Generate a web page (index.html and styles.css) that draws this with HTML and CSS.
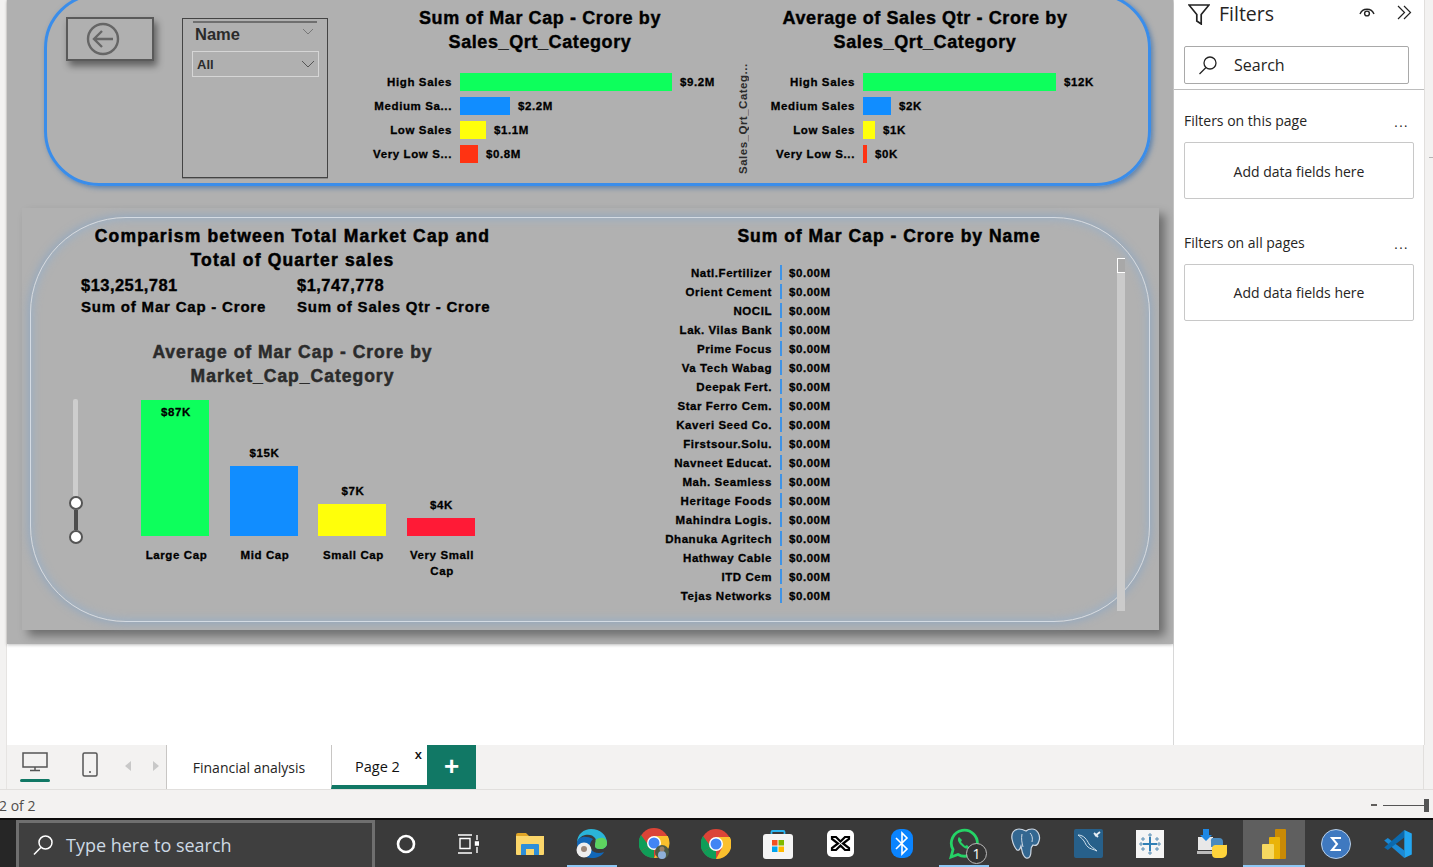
FILE: index.html
```html
<!DOCTYPE html>
<html lang="en">
<head>
<meta charset="utf-8">
<title>Financial analysis</title>
<link rel="stylesheet" href="styles.css">
</head>
<body>
<div class="app">
  <div class="main">
    <div class="gutter"></div>
    <div class="report">
      <div class="page">
        <section class="top-card">
          <div class="back-btn">
            <svg width="34" height="34" viewBox="0 0 34 34" fill="none" stroke="#666" stroke-width="2.4"><circle cx="17" cy="17" r="15"/><path d="M27 17H8M16 9l-8 8 8 8"/></svg>
          </div>
          <div class="slicer">
            <div class="slicer-head"><span>Name</span><svg class="chev" width="12" height="7" viewBox="0 0 12 7" fill="none" stroke="#777"><path d="M1 1l5 5 5-5"/></svg></div>
            <div class="slicer-drop"><span>All</span><svg width="14" height="8" viewBox="0 0 14 8" fill="none" stroke="#555"><path d="M1 1l6 6 6-6"/></svg></div>
          </div>
          <div class="hchart hchart-a">
            <h2 class="title">Sum of Mar Cap - Crore by<br>Sales_Qrt_Category</h2>
            <div class="hrows">
              <div class="hrow"><span class="hlabel">High Sales</span><i class="hbar green w212"></i><b>$9.2M</b></div>
              <div class="hrow"><span class="hlabel">Medium Sa...</span><i class="hbar blue w50"></i><b>$2.2M</b></div>
              <div class="hrow"><span class="hlabel">Low Sales</span><i class="hbar yellow w26"></i><b>$1.1M</b></div>
              <div class="hrow"><span class="hlabel">Very Low S...</span><i class="hbar red w18"></i><b>$0.8M</b></div>
            </div>
          </div>
          <div class="hchart hchart-b">
            <h2 class="title">Average of Sales Qtr - Crore by<br>Sales_Qrt_Category</h2>
            <div class="hbody">
              <div class="axis-title"><span>Sales_Qrt_Categ...</span></div>
              <div class="hrows">
                <div class="hrow"><span class="hlabel">High Sales</span><i class="hbar green w193"></i><b>$12K</b></div>
                <div class="hrow"><span class="hlabel">Medium Sales</span><i class="hbar blue w28"></i><b>$2K</b></div>
                <div class="hrow"><span class="hlabel">Low Sales</span><i class="hbar yellow w12"></i><b>$1K</b></div>
                <div class="hrow"><span class="hlabel">Very Low S...</span><i class="hbar red w4"></i><b>$0K</b></div>
              </div>
            </div>
          </div>
        </section>

        <section class="bottom-panel">
          <div class="inner">
            <div class="left-col">
              <h2 class="title wide">Comparism between Total Market Cap and<br>Total of Quarter sales</h2>
              <div class="kpis">
                <div class="kpi"><strong>$13,251,781</strong><span>Sum of Mar Cap - Crore</span></div>
                <div class="kpi"><strong>$1,747,778</strong><span>Sum of Sales Qtr - Crore</span></div>
              </div>
              <h2 class="title wide muted">Average of Mar Cap - Crore by<br>Market_Cap_Category</h2>
              <div class="vchart">
                <div class="range">
                  <div class="track"></div>
                  <div class="thumb"></div>
                  <div class="span"></div>
                  <div class="thumb"></div>
                </div>
                <div class="cols">
                  <div class="col"><div class="plot"><div class="vbar green h136"><em>$87K</em></div></div><p>Large Cap</p></div>
                  <div class="col"><div class="plot"><em>$15K</em><div class="vbar blue h70"></div></div><p>Mid Cap</p></div>
                  <div class="col"><div class="plot"><em>$7K</em><div class="vbar yellow h32"></div></div><p>Small Cap</p></div>
                  <div class="col"><div class="plot"><em>$4K</em><div class="vbar crimson h18"></div></div><p>Very Small<br>Cap</p></div>
                </div>
              </div>
            </div>
            <div class="right-col">
              <h2 class="title wide narrow">Sum of Mar Cap - Crore by Name</h2>
              <div class="list">
                <div class="lrow"><span>Natl.Fertilizer</span><i></i><b>$0.00M</b></div>
                <div class="lrow"><span>Orient Cement</span><i></i><b>$0.00M</b></div>
                <div class="lrow"><span>NOCIL</span><i></i><b>$0.00M</b></div>
                <div class="lrow"><span>Lak. Vilas Bank</span><i></i><b>$0.00M</b></div>
                <div class="lrow"><span>Prime Focus</span><i></i><b>$0.00M</b></div>
                <div class="lrow"><span>Va Tech Wabag</span><i></i><b>$0.00M</b></div>
                <div class="lrow"><span>Deepak Fert.</span><i></i><b>$0.00M</b></div>
                <div class="lrow"><span>Star Ferro Cem.</span><i></i><b>$0.00M</b></div>
                <div class="lrow"><span>Kaveri Seed Co.</span><i></i><b>$0.00M</b></div>
                <div class="lrow"><span>Firstsour.Solu.</span><i></i><b>$0.00M</b></div>
                <div class="lrow"><span>Navneet Educat.</span><i></i><b>$0.00M</b></div>
                <div class="lrow"><span>Mah. Seamless</span><i></i><b>$0.00M</b></div>
                <div class="lrow"><span>Heritage Foods</span><i></i><b>$0.00M</b></div>
                <div class="lrow"><span>Mahindra Logis.</span><i></i><b>$0.00M</b></div>
                <div class="lrow"><span>Dhanuka Agritech</span><i></i><b>$0.00M</b></div>
                <div class="lrow"><span>Hathway Cable</span><i></i><b>$0.00M</b></div>
                <div class="lrow"><span>ITD Cem</span><i></i><b>$0.00M</b></div>
                <div class="lrow"><span>Tejas Networks</span><i></i><b>$0.00M</b></div>
              </div>
              <div class="vscroll"><div class="vthumb"></div></div>
            </div>
          </div>
        </section>
      </div>
    </div>
    <aside class="filters">
      <div class="f-head">
        <svg width="22" height="21" viewBox="0 0 22 21" fill="none" stroke="#222" stroke-width="1.7"><path d="M1 1h20l-7.8 9.5V20l-4.4-3v-6.500z"/></svg>
        <span class="f-title">Filters</span>
        <svg class="f-eye" width="16" height="12" viewBox="0 0 16 12" fill="none" stroke="#222" stroke-width="1.4"><path d="M1 8a7.500 7.500 0 0 1 14 0"/><circle cx="8" cy="7.500" r="2.400"/></svg>
        <svg class="f-coll" width="15" height="15" viewBox="0 0 15 15" fill="none" stroke="#222" stroke-width="1.200"><path d="M1 1l6.500 6.500L1 14M7 1l6.500 6.500L7 14"/></svg>
      </div>
      <div class="f-search">
        <svg width="20" height="20" viewBox="0 0 20 20" fill="none" stroke="#222" stroke-width="1.300"><circle cx="12" cy="8" r="6"/><path d="M8 12.500L1.500 19"/></svg>
        <span>Search</span>
      </div>
      <div class="f-body">
        <div class="f-label"><span>Filters on this page</span><span class="dots">...</span></div>
        <div class="f-well">Add data fields here</div>
        <div class="f-label second"><span>Filters on all pages</span><span class="dots">...</span></div>
        <div class="f-well">Add data fields here</div>
      </div>
    </aside>
    <div class="strip"><i></i></div>
  </div>

  <div class="tabs">
    <div class="gutter"></div>
    <div class="views">
      <div class="view active">
        <svg width="26" height="20" viewBox="0 0 26 20" fill="none" stroke="#555" stroke-width="1.500"><rect x="1" y="1" width="24" height="14"/><path d="M13 15v3M8 18.500h10"/></svg>
      </div>
      <div class="view">
        <svg width="16" height="25" viewBox="0 0 16 25" fill="none" stroke="#555" stroke-width="1.500"><rect x="1" y="1" width="14" height="23" rx="1.500"/><path d="M7 20h2"/></svg>
      </div>
      <span class="tri left"></span>
      <span class="tri right"></span>
    </div>
    <div class="tab">Financial analysis</div>
    <div class="tab current">Page 2<span class="x">x</span></div>
    <div class="add">+</div>
    <div class="tabs-fill"></div>
  </div>

  <div class="status">
    <span class="pg">2 of 2</span>
    <div class="zoom"><span class="minus"></span><span class="zline"></span><span class="zhandle"></span></div>
  </div>

  <footer class="taskbar">
    <div class="tb-start"></div>
    <div class="tb-search">
      <svg width="22" height="22" viewBox="0 0 22 22" fill="none" stroke="#fff" stroke-width="1.500"><circle cx="13.500" cy="8.500" r="6.500"/><path d="M8.800 13.500L2 20.500"/></svg>
      <span>Type here to search</span>
    </div>
    <div class="tb-icons">
      <div class="tb-i"><svg width="22" height="22" viewBox="0 0 22 22" fill="none" stroke="#fff" stroke-width="2.600"><circle cx="11" cy="11" r="8"/></svg></div>
      <div class="tb-i"><svg width="22" height="20" viewBox="0 0 22 20" fill="none" stroke="#fff" stroke-width="1.400"><path d="M1 1h14M1 19h14M3 4.500h10v10H3zM20 1v5M20 13v6"/><path d="M18.500 8h3v3h-3z" fill="#fff"/></svg></div>
      <div class="tb-i"><svg width="28" height="24" viewBox="0 0 28 24"><path d="M0 3a2 2 0 0 1 2-2h8l3 3H0z" fill="#e0a526"/><path d="M0 4h28v18a1 1 0 0 1-1 1H1a1 1 0 0 1-1-1z" fill="#fbd66a"/><path d="M6 12h16a1 1 0 0 1 1 1v10h-5v-6h-8v6H5V13a1 1 0 0 1 1-1z" fill="#2f8fd8"/></svg></div>
      <div class="tb-i on"><svg width="32" height="31" viewBox="0 0 32 31"><path d="M1 15C1 6 8 1 15 1c9 0 16 6 16 14 0 4-3 6-7 6-3 0-5-1-5-3 0-4 2-5 0-8-2-3-6-4-10-3C5 8 2 11 1 15z" fill="#2ab4d9"/><path d="M31 15c0 4-3 6-7 6-3 0-5-1-5-3 0-3 1-4 .500-6C25 8 31 10 31 15z" fill="#5ed35f"/><path d="M1 15c0 9 6 15 15 15 5 0 10-2 12-6-5 2-11 1-13-3-2-3-1-7 2-10C10 7 2 8 1 15z" fill="#1167b8"/><circle cx="8" cy="22" r="7.500" fill="#eee"/><circle cx="8" cy="21" r="3" fill="#9a8678"/></svg></div>
      <div class="tb-i"><svg width="31" height="31" viewBox="0 0 31 31"><circle cx="15" cy="15" r="15" fill="#db4437"/><path d="M15 15L2 23a15 15 0 0 0 13 7z" fill="#0f9d58"/><path d="M2 7A15 15 0 0 0 2 23l8-5z" fill="#0f9d58"/><path d="M15 8h13.800A15 15 0 0 1 15 30l6-11z" fill="#fbc02d"/><circle cx="15" cy="15" r="7" fill="#fff"/><circle cx="15" cy="15" r="5.500" fill="#4285f4"/><circle cx="23" cy="24" r="7" fill="#4d5a45"/><circle cx="23" cy="27" r="4" fill="#8eb0d8"/><circle cx="23" cy="21" r="2.500" fill="#9a8168"/></svg></div>
      <div class="tb-i"><svg width="30" height="30" viewBox="0 0 30 30"><circle cx="15" cy="15" r="15" fill="#db4437"/><path d="M15 15L2 23a15 15 0 0 0 13 7z" fill="#0f9d58"/><path d="M2 7A15 15 0 0 0 2 23l8-5z" fill="#0f9d58"/><path d="M15 8h13.800A15 15 0 0 1 15 30l6-11z" fill="#fbc02d"/><circle cx="15" cy="15" r="7" fill="#fff"/><circle cx="15" cy="15" r="5.500" fill="#4285f4"/></svg></div>
      <div class="tb-i"><svg width="30" height="30" viewBox="0 0 30 30"><path d="M8.500 7V3a1 1 0 0 1 1-1h11a1 1 0 0 1 1 1v4" fill="none" stroke="#2bb5f0" stroke-width="1.800"/><rect y="5" width="30" height="25" rx="3" fill="#f4f4f4"/><rect x="9" y="11" width="5.500" height="5.500" fill="#f25022"/><rect x="15.500" y="11" width="5.500" height="5.500" fill="#7fba00"/><rect x="9" y="17.500" width="5.500" height="5.500" fill="#00a4ef"/><rect x="15.500" y="17.500" width="5.500" height="5.500" fill="#ffb900"/></svg></div>
      <div class="tb-i"><svg width="27" height="27" viewBox="0 0 27 27"><rect width="27" height="27" rx="5" fill="#fff"/><path d="M5 7h4l4.500 4.500L18 7h4v2l-6 4.500 6 4.500v2h-4l-4.500-4.500L9 20H5v-2l6-4.500L5 9z" fill="none" stroke="#000" stroke-width="2.200"/></svg></div>
      <div class="tb-i"><svg width="22" height="29" viewBox="0 0 22 29"><rect width="22" height="29" rx="9" fill="#0a84ff"/><path d="M5 9l11 11-5 5V4l5 5-11 11" fill="none" stroke="#fff" stroke-width="1.600"/></svg></div>
      <div class="tb-i on"><svg width="32" height="32" viewBox="0 0 32 32" fill="none"><path d="M3 29l2-7.500A13 13 0 1 1 10 26.500z" stroke="#25d366" stroke-width="2.800"/><path d="M11 9c-2 2-1 5 2 8s6 5 9 3l-3-3-2 1-4-4 1-2z" fill="#25d366"/></svg><span class="badge">1</span></div>
      <div class="tb-i"><svg width="30" height="31" viewBox="0 0 30 31"><path d="M8 1C3 1 0 5 1 11c1 5 3 9 5 11 2 1 3-1 4-4 1 4 1 10 5 12 4 1 5-3 5-8 0-3 1-4 2-5 3 1 5 0 6-4 2-6-2-12-7-12-3 0-5 1-6 2C13 2 11 1 8 1z" fill="#336791" stroke="#cfd9e4" stroke-width="1.200"/><path d="M11 6c-1 5 0 9 1 13M19 5c2 2 3 5 2 9" stroke="#cfd9e4" fill="none"/></svg></div>
      <div class="tb-i"><svg width="29" height="29" viewBox="0 0 29 29"><rect width="29" height="29" rx="2" fill="#27608a"/><path d="M4 6c6 0 9 5 11 9 2 3 5 4 8 7-4-2-7-2-9-4-3-3-2-3-4-6C8 9 6 8 4 6z" fill="none" stroke="#cfe0ec" stroke-width="1"/><path d="M21 7l5-4M24 8l-4-4" stroke="#e6eef4" stroke-width="1.800"/></svg></div>
      <div class="tb-i"><svg width="28" height="28" viewBox="0 0 28 28"><rect width="28" height="28" fill="#f5f5f5"/><path d="M14 7v14M7 14h14" stroke="#2f7fb6" stroke-width="2"/><path d="M14 3v4M12 5h4M14 21v4M12 23h4M3 14h4M5 12v4M21 14h4M23 12v4M7 7v4M5 9h4M21 7v4M19 9h4M7 17v4M5 19h4M21 17v4M19 19h4" stroke="#5b8fb5" stroke-width="1"/></svg></div>
      <div class="tb-i"><svg width="30" height="30" viewBox="0 0 30 30"><rect x="1" y="8" width="15" height="13" fill="#e8e8e8"/><rect x="0" y="22" width="16" height="3" fill="#bbb"/><path d="M6 0h6v6h3l-6 6-6-6h3z" fill="#1e88e5"/><path d="M15 9h7a4 4 0 0 1 4 4v3H18v2h-4v-5a4 4 0 0 1 1-4z" fill="#4b8bbe"/><path d="M18 16h11a1 1 0 0 1 1 2v6a5 5 0 0 1-5 5h-6a4 4 0 0 1-4-4v-5a4 4 0 0 1 3-4z" fill="#ffd43b"/></svg></div>
      <div class="tb-i pbi on"><svg width="24" height="30" viewBox="0 0 24 30"><rect x="13" width="11" height="30" rx="1" fill="#c98a05"/><rect x="7" y="8" width="11" height="22" rx="1" fill="#eab308"/><rect y="15" width="12" height="15" rx="1" fill="#f6d860"/></svg></div>
      <div class="tb-i"><svg width="30" height="30" viewBox="0 0 30 30"><circle cx="15" cy="15" r="14.500" fill="#3f79c0" stroke="#b8cfe8"/><path d="M20 9h-9l5 6-5 6h9" fill="none" stroke="#fff" stroke-width="2"/></svg></div>
      <div class="tb-i"><svg width="30" height="30" viewBox="0 0 100 100"><polygon points="4,38 16,30 71,72 71,97" fill="#1a8ad6"/><polygon points="71,3 71,28 16,70 4,62" fill="#0b69ad"/><polygon points="71,3 96,15 96,85 71,97" fill="#23a7f2"/></svg></div>
    </div>
  </footer>
</div>
</body>
</html>
```
FILE: styles.css
```css
* { box-sizing: border-box; }
html, body { margin: 0; padding: 0; }
body { width: 1433px; height: 867px; overflow: hidden; background: #f3f2f1; font-family: "Open Sans", "Noto Sans", sans-serif; color: #252423; }
h2, p { margin: 0; font-weight: inherit; }
i, em { font-style: normal; }

.app { display: flex; flex-direction: column; width: 1433px; height: 867px; }
.main { display: flex; height: 745px; overflow: hidden; }
.gutter { width: 7px; flex: none; background: #f3f2f1; border-right: 1px solid #e6e4e2; }
.report { width: 1167px; flex: none; background: #fff; border-right: 1px solid #d8d8d8; }

.page { height: 644px; background: #b0b0b0; box-shadow: 0 1px 3px rgba(0,0,0,.25); display: flow-root; }

/* shared report text */
.title, .hrow, .lrow, .kpi, .col, .slicer, .axis-title {
  font-family: "Liberation Sans", Arial, sans-serif;
  font-weight: 700;
  color: #000;
}
.title { font-size: 18px; line-height: 24px; text-align: center; letter-spacing: .6px; -webkit-text-stroke: .4px #000; }
.title.wide { font-size: 17.500px; letter-spacing: 1.150px; -webkit-text-stroke: .5px #000; }
.title.wide.narrow { letter-spacing: 1px; }
.title.muted { color: #2b2b2b; -webkit-text-stroke-color: #2b2b2b; letter-spacing: 1px; }

/* top card */
.top-card {
  display: flex; align-items: flex-start;
  margin: -7px 0 0 37px; width: 1107px; height: 193px;
  padding: 21px 0 0 19px;
  border-radius: 55px; border: 3px solid #3a8dea;
  box-shadow: 2px 2px 5px rgba(40,100,170,.6);
}
.back-btn {
  width: 88px; height: 44px; flex: none; padding: 3px 0 0 18px;
  border: 2px solid #5a5a5a; box-shadow: 3px 5px 7px rgba(0,0,0,.45);
}
.back-btn svg { display: block; }
.slicer { width: 146px; height: 160px; flex: none; margin: 1px 0 0 28px; padding: 2px 9px; border: 1px solid #444; box-shadow: 0 1px 0 #8a8a8a; color: #2b2b2b; }
.slicer-head { display: flex; justify-content: space-between; padding: 2px 3px 7px 2px; border-top: 2px solid #6f6f6f; font-size: 16.500px; line-height: 18px; margin: 0 1px; }
.chev { margin-top: 3px; }
.slicer-drop { display: flex; justify-content: space-between; align-items: center; width: 127px; height: 26px; padding: 0 3px 0 4px; margin: 1px 0 0 0; border: 1px solid #d6d6d6; font-size: 13px; }

.hchart { width: 400px; flex: none; margin-top: -11px; }
.hchart-a { margin-left: 12px; }
.hchart-b { margin-left: -15px; }
.hrows { margin-top: 16px; }
.hrow { display: flex; align-items: center; height: 24px; font-size: 11.500px; letter-spacing: .62px; -webkit-text-stroke: .3px #000; }
.hrow b { margin-left: 8px; white-space: nowrap; }
.hlabel { width: 112px; text-align: right; margin-right: 8px; white-space: nowrap; }
.hbody { display: flex; }
.hbody .hrows { flex: 1; }
.hbody .hlabel { width: 104px; }
.axis-title { width: 26px; padding-top: 10px; height: 120px; flex: none; display: flex; justify-content: flex-end; font-size: 11.500px; letter-spacing: .5px; color: #2b2b2b; }
.axis-title span { writing-mode: vertical-rl; transform: rotate(180deg); width: 14px; text-align: left; white-space: nowrap; height: 110px; }
.hbar { display: block; height: 18px; flex: none; }
.green { background: #0dff5c; }
.blue { background: #118dff; }
.yellow { background: #ffff0a; }
.red { background: #ff3312; }
.crimson { background: #ff1a36; }
.w212 { width: 212px; } .w50 { width: 50px; } .w26 { width: 26px; } .w18 { width: 18px; }
.w193 { width: 193px; } .w28 { width: 28px; } .w12 { width: 12px; } .w4 { width: 4px; }

/* bottom panel */
.bottom-panel { margin: 22px 0 0 15px; width: 1137px; height: 422px; padding: 9px 9px 8px 8px; background: #b1b1b1; box-shadow: 6px 6px 9px rgba(0,0,0,.38); }
.inner { display: flex; height: 405px; border-radius: 96px; border: 1px solid #d4dbe3; box-shadow: 0 0 8px 2px #95a9bf, inset 0 0 9px 2px #9db0c4; }
.left-col { width: 523px; flex: none; padding-top: 6px; }
.right-col { width: 522px; flex: none; margin-left: 74px; padding-top: 6px; position: relative; }
.kpis { display: flex; padding-left: 50px; margin-top: 1px; }
.kpi { display: flex; flex-direction: column; letter-spacing: .8px; -webkit-text-stroke: .35px #000; }
.kpi:first-child { width: 216px; }
.kpi strong { font-size: 16.500px; line-height: 24px; letter-spacing: .45px; }
.kpi span { font-size: 15px; line-height: 20px; }
.left-col .muted { margin-top: 23px; }

.vchart { display: flex; margin-top: 11px; padding-left: 37px; }
.range { width: 15px; flex: none; display: flex; flex-direction: column; align-items: center; }
.track { width: 5px; height: 97px; background: #cdcdcd; border-radius: 2px 2px 0 0; }
.thumb { width: 14px; height: 14px; flex: none; background: #fff; border: 2px solid #555; border-radius: 50%; }
.span { width: 4px; height: 20px; background: #4d4d4d; }
.cols { display: flex; margin-left: 58px; gap: 20.500px; }
.col { width: 68px; text-align: center; font-size: 11.500px; letter-spacing: .6px; -webkit-text-stroke: .3px #000; }
.plot { height: 137px; display: flex; flex-direction: column; justify-content: flex-end; align-items: stretch; }
.plot em { display: block; line-height: 14px; margin-bottom: 6px; padding-left: 2px; }
.vbar { display: block; }
.vbar em { padding-top: 5px; }
.h136 { height: 136px; } .h70 { height: 70px; } .h32 { height: 32px; } .h18 { height: 18px; }
.col p { line-height: 16px; margin-top: 11px; padding-left: 3px; width: 74px; margin-left: -3px; }

.list { margin-top: 15px; }
.lrow { display: flex; align-items: center; height: 19px; font-size: 11.500px; letter-spacing: .55px; -webkit-text-stroke: .3px #000; }
.lrow span { width: 144px; text-align: right; white-space: nowrap; }
.lrow i { width: 2px; height: 15px; background: #3f93e6; margin: 0 7px 0 8px; flex: none; }
.vscroll { position: absolute; left: 489px; top: 40px; width: 8px; height: 353px; background: #cbcbcb; }
.vthumb { height: 15px; width: 8px; background: #a8a8a8; border: 1.500px solid #fff; border-right: 0; }

/* filters */
.filters { width: 250px; flex: none; background: #fff; display: flex; flex-direction: column; }
.f-head { display: flex; align-items: center; height: 28px; padding-left: 14px; }
.f-title { font-size: 19.500px; margin-left: 9px; color: #252423; line-height: 28px; }
.f-eye { margin-left: 85px; margin-top: -5px; }
.f-coll { margin-left: 22px; margin-top: -3px; }
.f-search { display: flex; align-items: center; gap: 16px; width: 225px; height: 38px; margin: 18px 0 0 10px; padding-left: 13px; border: 1px solid #a9a9a9; border-radius: 2px; font-size: 16px; }
.f-body { margin-top: 5px; border-top: 1px solid #bdbdbd; padding: 20px 10px 0; }
.f-label { display: flex; justify-content: space-between; height: 22px; padding-right: 5px; font-size: 14px; line-height: 22px; }
.dots { font-size: 13px; letter-spacing: 1.500px; line-height: 24px; }
.f-label.second { margin-top: 33px; }
.f-well { height: 57px; margin-top: 10px; padding-top: 1px; display: flex; align-items: center; justify-content: center; border: 1px solid #c8c8c8; border-radius: 2px; font-size: 14px; }
.f-label.second + .f-well { padding-top: 0; }
.strip { flex: 1; background: #f3f2f1; border-left: 1px solid #e1dfdd; padding-top: 157px; }
.strip i { display: block; height: 1px; width: 4px; margin-left: 4px; background: #b5b5b5; }

/* tabs */
.tabs { display: flex; height: 45px; background: #f3f2f1; border-bottom: 1px solid #e1dfdd; }
.views { display: flex; align-items: flex-start; width: 159px; flex: none; }
.view { height: 44px; padding-top: 7px; }
.view svg { display: block; }
.view.active { width: 30px; margin-left: 13px; padding-left: 2px; }
.view.active::after { content: ""; display: block; width: 30px; height: 3px; margin: 7px 0 0 -2px; background: #117865; border-radius: 2px; }
.view:nth-child(2) { margin-left: 32px; }
.tri { width: 0; height: 0; border: 5px solid transparent; margin-top: 16px; }
.tri.left { border-right: 6px solid #c8c8c8; border-left: 0; margin-left: 27px; }
.tri.right { border-left: 6px solid #c8c8c8; border-right: 0; margin-left: 22px; }
.tab { display: flex; align-items: center; justify-content: center; width: 165px; height: 44px; padding-top: 1px; background: #fff; border-left: 1px solid #c8c6c4; font-size: 14px; }
.tab.current { width: 96px; position: relative; border-bottom: 4px solid #117865; padding-top: 3px; font-size: 14.500px; font-weight: 500; color: #111; padding-right: 4px; }
.x { position: absolute; right: 5px; top: 0; font-size: 13px; font-weight: 600; }
.add { width: 49px; height: 44px; flex: none; background: #117865; color: #fff; font: 700 26px/42px "Liberation Sans", sans-serif; text-align: center; }
.tabs-fill { width: 948px; flex: none; border-right: 1px solid #e1dfdd; }

/* status */
.status { height: 28px; display: flex; justify-content: space-between; align-items: center; padding-top: 2px; overflow: hidden; font-size: 14px; color: #4f4d4b; }
.pg { margin-left: -1px; }
.zoom { display: flex; align-items: center; margin-right: 4px; }
.minus { width: 6px; height: 2px; background: #605e5c; }
.zline { width: 41px; height: 1px; background: #555; margin-left: 6px; }
.zhandle { width: 5px; height: 13px; background: #555; }

/* taskbar */
.taskbar { flex: 1; display: flex; background: #3a3a3a; border-top: 2px solid #0b0b0b; }
.tb-start { width: 16px; flex: none; background: #262626; }
.tb-search { width: 359px; flex: none; display: flex; align-items: center; gap: 12px; padding-left: 13px; background: #3f3f3f; border: 3px solid #6f6f6f; border-bottom: 0; font-size: 18px; color: #cdd9e4; }
.tb-icons { display: flex; }
.tb-i { width: 62px; height: 47px; display: flex; align-items: center; justify-content: center; position: relative; flex: none; }
.tb-i.on::after { content: ""; position: absolute; left: 6px; right: 6px; bottom: 0; height: 2px; background: #8ec8f5; }
.tb-i.pbi { background: #5f5f5f; }
.tb-i.pbi::after { left: 0; right: 0; }
.badge { position: absolute; left: 33px; top: 23px; width: 21px; height: 21px; border-radius: 50%; border: 1px solid #bbb; background: #333; color: #fff; font-size: 14px; line-height: 19px; text-align: center; }
```
